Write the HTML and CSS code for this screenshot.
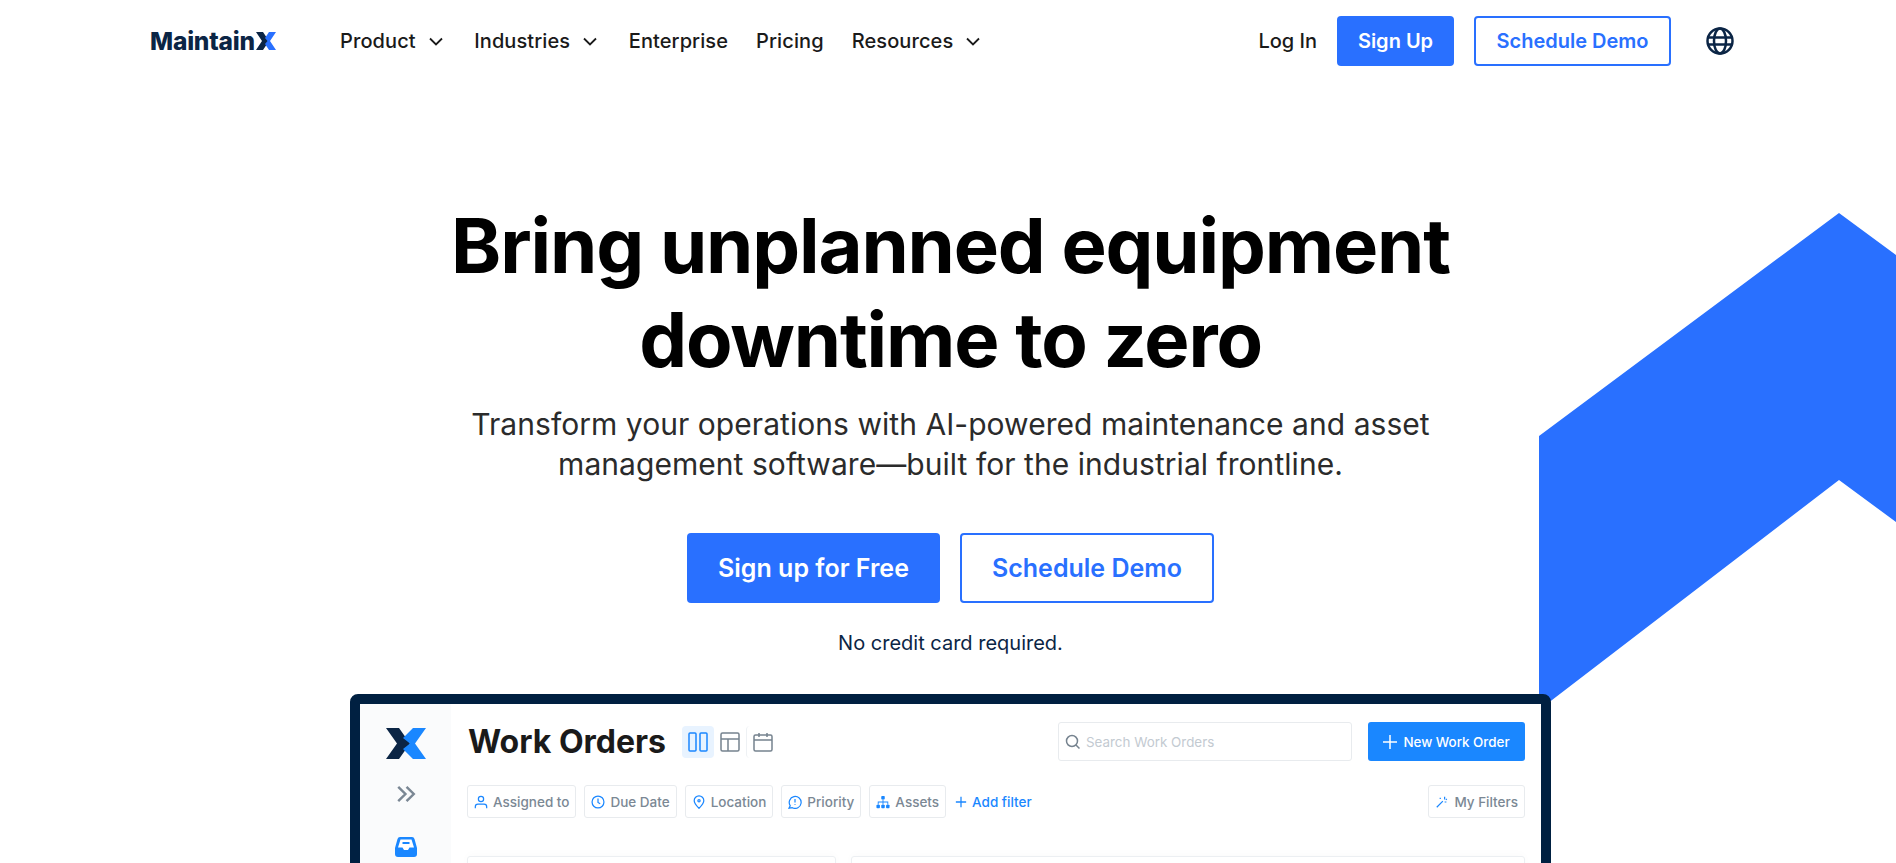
FILE: index.html
```html
<!DOCTYPE html>
<html lang="en">
<head>
    <meta charset="UTF-8">
    <meta name="viewport" content="width=device-width, initial-scale=1.0">
    <title>MaintainX</title>
    <link rel="stylesheet" href="styles.css">
</head>
<body>
<header class="site-nav">
    <a class="logo" href="#">Maintain<svg class="logo-x" viewBox="0 0 20 18"><path fill="#0b2545" d="M0 0h7l6 9-6 9H0l6-9z"/><path fill="#2970ff" d="M13 0h7l-6 9 6 9h-7l-4-6 2.500-3L9 6z"/></svg></a>
    <nav class="nav-links">
        <a href="#">Product <svg class="chevron" viewBox="0 0 14 9"><path d="M1 1.500l6 6 6-6"/></svg></a>
        <a href="#">Industries <svg class="chevron" viewBox="0 0 14 9"><path d="M1 1.500l6 6 6-6"/></svg></a>
        <a href="#">Enterprise</a>
        <a href="#">Pricing</a>
        <a href="#">Resources <svg class="chevron" viewBox="0 0 14 9"><path d="M1 1.500l6 6 6-6"/></svg></a>
    </nav>
    <div class="nav-actions">
        <a class="login" href="#">Log In</a>
        <a class="btn btn-solid nav-signup" href="#">Sign Up</a>
        <a class="btn btn-outline nav-demo" href="#">Schedule Demo</a>
        <svg class="globe" viewBox="0 0 28 28"><circle cx="14" cy="14" r="12.500"/><ellipse cx="14" cy="14" rx="6" ry="12.500"/><path d="M2 10.500h24M2 17.500h24"/></svg>
    </div>
</header>

<main class="hero">
    <svg class="hero-shape" viewBox="0 0 357 863"><polygon points="0,436 300,213 357,255 357,522 300,480 0,710"/></svg>

    <h1>Bring unplanned equipment<br>downtime to zero</h1>
    <p class="lead">Transform your operations with AI-powered maintenance and asset management software—built for the industrial frontline.</p>
    <div class="cta">
        <a class="btn btn-solid" href="#">Sign up for Free</a>
        <a class="btn btn-outline" href="#">Schedule Demo</a>
    </div>
    <p class="note">No credit card required.</p>

    <!-- app preview -->
    <div class="app-frame">
        <aside class="app-side">
            <svg class="app-logo" viewBox="0 0 40 31"><path fill="#0b2545" d="M0 0h13l11 15.500L13 31H0l11-15.500z"/><path fill="#1a87ff" d="M27 0h13L29 15.500 40 31H27L17 21l7-5.500L17 10z"/></svg>
            <svg class="side-arrows" viewBox="0 0 18 16"><path d="M2 1.500l6.500 6.500L2 14.500M9.500 1.500L16 8l-6.500 6.500"/></svg>
            <svg class="side-inbox" viewBox="0 0 22 20"><path fill="#1a87ff" d="M5 0h12q2 0 2.500 2L22 11v6q0 3-3 3H3q-3 0-3-3v-6L2.500 2Q3 0 5 0z"/><path fill="#fff" d="M5.500 2.500h11L19 10.500h-4.500L13 13H9l-1.500-2.500H3z"/><path fill="#1a87ff" d="M7.500 5h7v2h-7z"/></svg>
        </aside>
        <section class="app-main">
            <div class="app-top">
                <h2>Work Orders</h2>
                <div class="view-icons">
                    <span class="view-on"><svg viewBox="0 0 20 20" class="ic-view"><rect x="1" y="1" width="7" height="18" rx="1"/><rect x="12" y="1" width="7" height="18" rx="1"/></svg></span>
                    <span><svg viewBox="0 0 20 20" class="ic-view grey"><rect x="1" y="1" width="18" height="18" rx="1.500"/><path d="M1 7h18M8 7v12"/></svg></span>
                    <span class="view-sep"><svg viewBox="0 0 20 20" class="ic-view grey"><rect x="1" y="3" width="18" height="16" rx="1.500"/><path d="M1 8h18M6 1v4M14 1v4"/></svg></span>
                </div>
                <div class="search"><svg viewBox="0 0 16 16"><circle cx="7" cy="7" r="5.500"/><path d="M11 11l3.500 3.500"/></svg>Search Work Orders</div>
                <a class="new-order" href="#"><svg viewBox="0 0 14 14"><path d="M7 0v14M0 7h14"/></svg>New Work Order</a>
            </div>
            <div class="app-filters">
                <span class="chip"><svg viewBox="0 0 16 16"><circle cx="8" cy="4.500" r="3"/><path d="M1.500 15v-1.500q0-3 3-3h7q3 0 3 3V15"/></svg>Assigned to</span>
                <span class="chip"><svg viewBox="0 0 16 16"><circle cx="8" cy="8" r="6.800"/><path d="M8 4v4.500l2.500 1.500"/></svg>Due Date</span>
                <span class="chip"><svg viewBox="0 0 16 16"><path d="M8 15.200C4.500 11.500 2.500 9 2.500 6.500a5.500 5.500 0 0 1 11 0c0 2.500-2 5-5.500 8.700z"/><circle cx="8" cy="6.500" r="1.300"/></svg>Location</span>
                <span class="chip"><svg viewBox="0 0 16 16"><path d="M1.200 15l1.300-2.800A6.800 6.800 0 1 1 5 14.500z"/><path d="M8 4.500V8.500M8 10.500v1"/></svg>Priority</span>
                <span class="chip"><svg viewBox="0 0 16 16" class="filled"><rect x="6" y="1" width="4" height="4" rx="1"/><rect x="0.500" y="11" width="4" height="4" rx="1"/><rect x="6" y="11" width="4" height="4" rx="1"/><rect x="11.500" y="11" width="4" height="4" rx="1"/><path d="M7.500 5h1v2.500H14V11h-1V8.500H8.500V11h-1V8.500H3V11H2V7.500h5.500z"/></svg>Assets</span>
                <a class="add-filter" href="#"><svg viewBox="0 0 14 14"><path d="M7 1v12M1 7h12"/></svg>Add filter</a>
                <span class="chip chip-end"><svg viewBox="0 0 16 16"><path d="M2 14l7-7M11 2v3M13 8h-2M6 3v1.500M13.500 4.500l-1 1"/></svg>My Filters</span>
            </div>
            <div class="app-cards">
                <div class="app-card card-narrow"></div>
                <div class="app-card card-wide"></div>
            </div>
        </section>
    </div>
</main>
</body>
</html>
```

FILE: styles.css
```css
* {
    box-sizing: border-box;
}
html, body {
    margin: 0;
    height: 100%;
    overflow: hidden;
}
body {
    font-family: 'Inter', sans-serif;
    background-color: #fff;
    color: #000;
}
a {
    text-decoration: none;
    color: inherit;
}

/* top nav */
.site-nav {
    display: flex;
    align-items: center;
    height: 82px;
    padding: 0 162px 0 150px;
    font-size: 20px;
    font-weight: 500;
    color: #1a1a1a;
}
.logo {
    display: flex;
    align-items: center;
    width: 190px;
    font-size: 24.500px;
    font-weight: 800;
    letter-spacing: -0.2px;
    color: #0b2545;
}
.logo-x {
    width: 20px;
    height: 18px;
    margin-left: 1px;
}
.nav-links {
    display: flex;
    align-items: center;
    gap: 28px;
    letter-spacing: 0.1px;
}
.nav-links a {
    display: flex;
    align-items: center;
    gap: 13px;
}
.chevron {
    width: 14px;
    height: 9px;
    margin-right: 3.500px;
    fill: none;
    stroke: #1a1a1a;
    stroke-width: 1.800;
}
.nav-actions {
    display: flex;
    align-items: center;
    margin-left: auto;
}
.login {
    margin-right: 20px;
}
.btn {
    display: flex;
    align-items: center;
    justify-content: center;
    border-radius: 4px;
    font-weight: 600;
}
.btn-solid {
    background-color: #2970ff;
    color: #fff;
}
.btn-outline {
    background-color: #fff;
    border: 2px solid #2970ff;
    color: #2970ff;
}
.nav-signup {
    width: 117px;
    height: 50px;
    margin-right: 20px;
}
.nav-demo {
    width: 197px;
    height: 50px;
    margin-right: 35px;
}
.globe {
    width: 28px;
    height: 28px;
    fill: none;
    stroke: #0b2545;
    stroke-width: 2.500;
}

/* hero */
.hero {
    position: relative;
    display: flex;
    flex-direction: column;
    align-items: center;
    padding: 116px 0 0 5px;
    text-align: center;
}
.hero-shape {
    position: absolute;
    top: -82px;
    right: 0;
    width: 357px;
    height: 863px;
    fill: #2970ff;
}
h1 {
    position: relative;
    margin: 0;
    font-size: 76px;
    line-height: 94px;
    font-weight: 700;
    letter-spacing: -1.150px;
}
.lead {
    position: relative;
    width: 1000px;
    margin: 18px 0 0;
    font-size: 30px;
    line-height: 40px;
    letter-spacing: 0.05px;
    color: #2b2b2b;
}
.cta {
    position: relative;
    display: flex;
    gap: 20px;
    margin-top: 49px;
    font-size: 25px;
}
.cta .btn-solid {
    width: 253px;
    height: 70px;
}
.cta .btn-outline {
    width: 254px;
    height: 70px;
}
.note {
    margin: 26px 0 0;
    font-size: 20px;
    line-height: 28px;
    color: #0b2545;
}

/* app preview */
.app-frame {
    position: relative;
    display: flex;
    width: 1201px;
    height: 500px;
    margin-top: 37px;
    border: 10px solid #002041;
    border-radius: 8px;
    background-color: #fff;
    text-align: left;
    flex-shrink: 0;
}
.app-side {
    display: flex;
    flex-direction: column;
    align-items: center;
    width: 91px;
    padding-top: 24px;
    background-color: #fafbfc;
}
.app-logo {
    width: 40px;
    height: 31px;
}
.side-arrows {
    width: 20px;
    height: 18px;
    margin-top: 26px;
    fill: none;
    stroke: #7a8794;
    stroke-width: 2.200;
}
.side-inbox {
    width: 22px;
    height: 20px;
    margin-top: 34px;
}
.app-main {
    flex: 1;
    padding: 18px 16px 0;
}
.app-top {
    display: flex;
    align-items: center;
    height: 39px;
}
.app-top h2 {
    margin: 0 0 0 1px;
    font-size: 32px;
    font-weight: 700;
    color: #1a1a1a;
}
.view-icons {
    display: flex;
    align-items: center;
    margin-left: 16px;
}
.view-icons span {
    display: flex;
    align-items: center;
    justify-content: center;
    width: 32px;
    height: 32px;
    border-radius: 4px;
}
.view-icons .view-on {
    background-color: #e8f3ff;
}
.view-icons .view-sep {
    border-left: 1px solid #eef1f4;
}
.ic-view {
    width: 20px;
    height: 20px;
    fill: none;
    stroke: #1a87ff;
    stroke-width: 1.500;
}
.ic-view.grey {
    stroke: #76838f;
}
.search {
    display: flex;
    align-items: center;
    gap: 5px;
    width: 294px;
    height: 39px;
    margin-left: auto;
    padding-left: 6px;
    border: 1px solid #e8ebee;
    border-radius: 3px;
    font-size: 13.400px;
    color: #c3cad1;
}
.search svg {
    width: 16px;
    height: 16px;
    fill: none;
    stroke: #76838f;
    stroke-width: 1.500;
}
.new-order {
    display: flex;
    align-items: center;
    justify-content: center;
    gap: 6px;
    width: 157px;
    height: 39px;
    margin-left: 16px;
    border-radius: 3px;
    background-color: #1a87ff;
    font-size: 13.400px;
    font-weight: 500;
    color: #fff;
}
.new-order svg {
    width: 14px;
    height: 14px;
    fill: none;
    stroke: #fff;
    stroke-width: 1.500;
}
.app-filters {
    display: flex;
    align-items: center;
    gap: 8px;
    margin-top: 24px;
}
.chip {
    display: flex;
    align-items: center;
    gap: 5px;
    height: 33px;
    padding: 0 6px;
    border: 1px solid #e8ebee;
    border-radius: 3px;
    font-size: 13.500px;
    font-weight: 500;
    color: #7b8894;
}
.chip svg {
    width: 14px;
    height: 14px;
    fill: none;
    stroke: #1a87ff;
    stroke-width: 1.400;
}
.chip svg.filled {
    fill: #1a87ff;
    stroke: none;
}
.chip-end {
    margin-left: auto;
}
.add-filter {
    display: flex;
    align-items: center;
    gap: 5px;
    margin-left: 1px;
    font-size: 13.500px;
    font-weight: 500;
    color: #1a87ff;
}
.add-filter svg {
    width: 12px;
    height: 12px;
    fill: none;
    stroke: #1a87ff;
    stroke-width: 1.500;
}
.app-cards {
    display: flex;
    gap: 15px;
    margin-top: 38px;
}
.app-card {
    height: 200px;
    border: 1px solid #eceff2;
    border-radius: 3px;
    box-shadow: 0 -2px 8px rgba(0, 0, 0, 0.02);
}
.card-narrow {
    width: 369px;
}
.card-wide {
    flex: 1;
}
```
